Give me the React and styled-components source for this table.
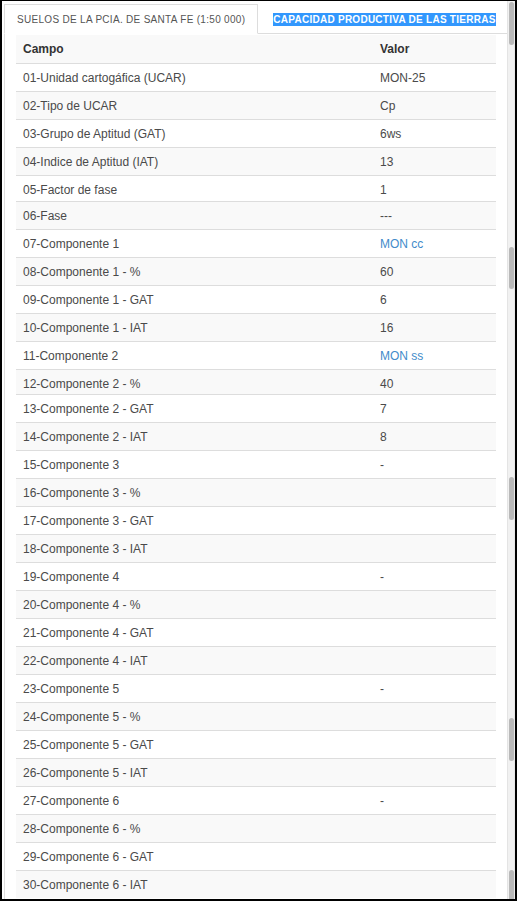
import React from "react";
import styled, { createGlobalStyle } from "styled-components";

const Global = createGlobalStyle`
  html, body { margin: 0; padding: 0; background: #fff; }
  body { font-family: "Liberation Sans", Arial, sans-serif; }
  * { box-sizing: border-box; }
`;

const Frame = styled.div`
  width: 517px;
  height: 901px;
  border-style: solid;
  border-color: #000;
  border-width: 1px 2px 2px 2px;
  display: flex;
  overflow: hidden;
  background: #fff;
`;

const Main = styled.div`
  flex: 1;
  min-width: 0;
  display: flex;
  flex-direction: column;
  padding-left: 2px;
`;

const TabBar = styled.div`
  height: 33px;
  padding-top: 3px;
  display: flex;
  align-items: flex-end;
  border-bottom: 1px solid #ddd;
`;

const Tab = styled.div`
  height: 30px;
  margin-bottom: -1px;
  margin-right: 2px;
  padding: 1px 12px 0 12px;
  display: flex;
  align-items: center;
  border: 1px solid ${(p) => (p.$active ? "#ddd" : "transparent")};
  border-bottom-color: transparent;
  background: ${(p) => (p.$active ? "#fff" : "transparent")};
  font-size: 10px;
  letter-spacing: ${(p) => (p.$active ? "0.3px" : "0.26px")};
  font-weight: ${(p) => (p.$active ? 400 : 700)};
  color: #555;
  white-space: nowrap;
`;

const Selected = styled.span`
  display: inline-block;
  line-height: 13px;
  background: #3297fd;
  color: #fff;
`;

const Panel = styled.div`
  flex: 1;
  border-left: 1px solid #ddd;
  padding: 1px 11px 0 11px;
  overflow: hidden;
`;

const Table = styled.div`
  width: 480px;
  font-size: 12px;
  line-height: 17px;
  color: #4a4a4a;
`;

const Row = styled.div`
  display: grid;
  grid-template-columns: 357px 1fr;
  background: ${(p) => (p.$striped ? "#f9f9f9" : "#fff")};
  border-top: ${(p) => (p.$head ? "none" : "1px solid #ddd")};
  padding: ${(p) => (p.$head ? 6 : 6)}px 0 ${(p) => p.$pb}px 0;
  font-weight: ${(p) => (p.$head ? 700 : 400)};
  color: ${(p) => (p.$head ? "#333" : "inherit")};
`;

const Cell = styled.div`
  padding: 0 7px;
  white-space: nowrap;
`;

const Link = styled.span`
  color: #428bca;
`;

const ScrollTrack = styled.div`
  position: relative;
  width: 8px;
  flex: none;
  background: #f1f1f1;
  border-left: 1px solid #e4e4e4;
  border-right: 1px solid #e8e8e8;
`;

const Thumb = styled.div`
  position: absolute;
  left: 1px;
  width: 5px;
  border-radius: 3px;
  background: #b9b9b9;
`;

const rows = [
  ["01-Unidad cartogáfica (UCAR)", "MON-25"],
  ["02-Tipo de UCAR", "Cp"],
  ["03-Grupo de Aptitud (GAT)", "6ws"],
  ["04-Indice de Aptitud (IAT)", "13"],
  ["05-Factor de fase", "1", 2],
  ["06-Fase", "---"],
  ["07-Componente 1", "MON cc", 4, true],
  ["08-Componente 1 - %", "60"],
  ["09-Componente 1 - GAT", "6"],
  ["10-Componente 1 - IAT", "16"],
  ["11-Componente 2", "MON ss", 4, true],
  ["12-Componente 2 - %", "40", 1],
  ["13-Componente 2 - GAT", "7"],
  ["14-Componente 2 - IAT", "8"],
  ["15-Componente 3", "-"],
  ["16-Componente 3 - %", ""],
  ["17-Componente 3 - GAT", ""],
  ["18-Componente 3 - IAT", ""],
  ["19-Componente 4", "-"],
  ["20-Componente 4 - %", ""],
  ["21-Componente 4 - GAT", ""],
  ["22-Componente 4 - IAT", ""],
  ["23-Componente 5", "-"],
  ["24-Componente 5 - %", ""],
  ["25-Componente 5 - GAT", ""],
  ["26-Componente 5 - IAT", ""],
  ["27-Componente 6", "-"],
  ["28-Componente 6 - %", ""],
  ["29-Componente 6 - GAT", ""],
  ["30-Componente 6 - IAT", ""],
];

const thumbs = [
  [1, 43],
  [246, 42],
  [476, 43],
  [717, 43],
  [869, 40],
];

export default function App() {
  return (
    <>
      <Global />
      <Frame>
        <Main>
          <TabBar>
            <Tab $active>SUELOS DE LA PCIA. DE SANTA FE (1:50 000)</Tab>
            <Tab>
              <Selected>CAPACIDAD PRODUCTIVA DE LAS TIERRAS</Selected>
            </Tab>
          </TabBar>
          <Panel>
            <Table>
              <Row $head $striped $pb={5}>
                <Cell>Campo</Cell>
                <Cell>Valor</Cell>
              </Row>
              {rows.map(([k, v, pb = 4, link], i) => (
                <Row key={k} $striped={i % 2 === 1} $pb={pb}>
                  <Cell>{k}</Cell>
                  <Cell>{link ? <Link>{v}</Link> : v}</Cell>
                </Row>
              ))}
            </Table>
          </Panel>
        </Main>
        <ScrollTrack>
          {thumbs.map(([top, h]) => (
            <Thumb key={top} style={{ top, height: h }} />
          ))}
        </ScrollTrack>
      </Frame>
    </>
  );
}
